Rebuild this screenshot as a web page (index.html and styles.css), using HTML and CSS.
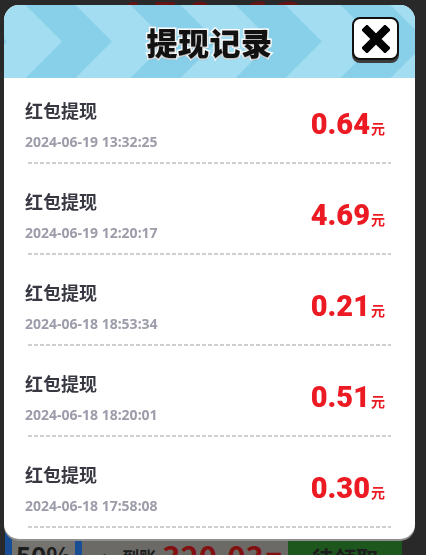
FILE: index.html
```html
<!DOCTYPE html>
<html lang="zh-CN">

<head>
  <meta charset="UTF-8">
  <meta name="viewport" content="width=device-width, initial-scale=1.0">
  <title>提现记录</title>
  <link rel="stylesheet" href="styles.css">
</head>

<body>

  <!-- game page behind the popup -->
  <div class="game">
    <div class="game-top">
      <span class="balance">150.63</span>
    </div>
    <div class="game-bottom">
      <div class="progress">50%</div>
      <span class="arrow">&lt;</span>
      <span class="arrive">到账</span>
      <span class="arrive-money">320.03<small>元</small></span>
      <button class="claim">待领取</button>
    </div>
  </div>

  <div class="mask">
    <div class="dialog">

      <div class="dialog-head">
        <svg class="stripes" width="411" height="73" viewBox="0 0 411 73">
          <defs>
            <pattern id="chevron" x="21.5" y="0" width="105" height="73" patternUnits="userSpaceOnUse">
              <polygon points="0,0 50,0 86.5,36.5 50,73 0,73 36.5,36.5" fill="#88cfe9" />
            </pattern>
          </defs>
          <rect width="411" height="73" fill="#a3ddf2" />
          <rect width="411" height="73" fill="url(#chevron)" />
        </svg>
        <div class="head-bar">
          <h1 class="title">提现记录</h1>
          <button class="close">
            <svg width="28" height="28" viewBox="0 0 28 28">
              <path d="M5 5 L23 23 M23 5 L5 23" stroke="#000" stroke-width="8" stroke-linecap="square" />
            </svg>
          </button>
        </div>
      </div>

      <ul class="records">
        <li class="record">
          <div class="info">
            <div class="name">红包提现</div>
            <div class="time">2024-06-19 13:32:25</div>
          </div>
          <div class="money">0.64<span class="unit">元</span></div>
        </li>
        <li class="record">
          <div class="info">
            <div class="name">红包提现</div>
            <div class="time">2024-06-19 12:20:17</div>
          </div>
          <div class="money">4.69<span class="unit">元</span></div>
        </li>
        <li class="record">
          <div class="info">
            <div class="name">红包提现</div>
            <div class="time">2024-06-18 18:53:34</div>
          </div>
          <div class="money">0.21<span class="unit">元</span></div>
        </li>
        <li class="record">
          <div class="info">
            <div class="name">红包提现</div>
            <div class="time">2024-06-18 18:20:01</div>
          </div>
          <div class="money">0.51<span class="unit">元</span></div>
        </li>
        <li class="record">
          <div class="info">
            <div class="name">红包提现</div>
            <div class="time">2024-06-18 17:58:08</div>
          </div>
          <div class="money">0.30<span class="unit">元</span></div>
        </li>
      </ul>

    </div>
  </div>

</body>

</html>
```

FILE: styles.css
```css
body {
  margin: 0;
  padding: 0;
  width: 426px;
  height: 555px;
  overflow: hidden;
  background: #474747;
  font-family: "Noto Sans", "Noto Sans CJK SC", sans-serif;
}

/* game page behind */
.game {
  height: 555px;
  overflow: hidden;
  display: flex;
  flex-direction: column;
  justify-content: space-between;
}

.game-top {
  text-align: center;
  height: 20px;
  overflow: hidden;
}

.balance {
  display: block;
  margin-top: -6px;
  font-size: 50px;
  line-height: 50px;
  font-weight: 700;
  color: #b02222;
  letter-spacing: 6px;
}

.game-bottom {
  height: 44px;
  overflow: hidden;
  margin: 0 24px 0 5px;
  background: #b8b7b0;
  display: flex;
  align-items: flex-start;
  white-space: nowrap;
  font-family: "Noto Sans CJK SC", sans-serif;
  font-weight: 700;
}

.game-bottom > * {
  flex-shrink: 0;
}

.progress {
  width: 63px;
  height: 60px;
  border: 7px solid #2b85ff;
  border-radius: 22px;
  background: #c8c7c0;
  color: #333;
  font-size: 26px;
  line-height: 26px;
  padding-top: 32px;
  text-align: center;
  margin-top: -8px;
}

.arrow {
  margin: 30px 0 0 12px;
  font-size: 22px;
  font-weight: 400;
  color: #333;
}

.arrive {
  margin: 33px 0 0 16px;
  font-size: 17px;
  color: #333;
}

.arrive-money {
  margin: 25px 0 0 6px;
  font-size: 31px;
  line-height: 40px;
  color: #e01c1c;
}

.arrive-money small {
  font-size: 20px;
}

.claim {
  margin: 26px 0 0 auto;
  width: 114px;
  height: 40px;
  border: 0;
  background: #329632;
  color: #333;
  font-size: 22px;
  font-family: inherit;
  font-weight: 700;
}

/* popup */
.mask {
  position: fixed;
  top: 0;
  left: 0;
  right: 0;
  bottom: 0;
  background: rgba(0, 0, 0, 0.42);
  padding: 5px 11px 0 4px;
}

.dialog {
  width: 411px;
  background: #fff;
  border-radius: 15px;
  overflow: hidden;
  box-shadow: 0 2px 0 #8f8f8f;
}

.dialog-head {
  display: grid;
  height: 73px;
}

.stripes,
.head-bar {
  grid-area: 1 / 1;
}

.head-bar {
  display: grid;
  grid-template-columns: 1fr auto 1fr;
  align-items: center;
}

.title {
  grid-column: 2;
  margin: 0;
  font-family: "Noto Sans CJK SC", sans-serif;
  font-weight: 900;
  font-size: 31px;
  line-height: 40px;
  letter-spacing: 0.5px;
  color: #111;
  -webkit-text-stroke: 3px #fff;
  paint-order: stroke fill;
  text-shadow: 0 1px 2px rgba(0, 0, 0, 0.35);
}

.close {
  grid-column: 3;
  justify-self: end;
  align-self: start;
  margin: 12px 16px 0 0;
  width: 47px;
  height: 43px;
  padding: 0;
  border: 2px solid #111;
  border-radius: 8px;
  background: #fff;
  box-shadow: 0 3px 0 #3c3c3c;
  display: flex;
  align-items: center;
  justify-content: center;
}

.records {
  list-style: none;
  margin: 0;
  padding: 0 24px 11px 21px;
}

.record {
  position: relative;
  display: flex;
  align-items: center;
  justify-content: space-between;
  padding: 25px 6px 13px 0;
}

.record:first-child {
  padding-top: 20px;
}

/* dashed divider */
.record::after {
  content: "";
  position: absolute;
  left: 3px;
  right: 0;
  bottom: 0;
  height: 2px;
  background: repeating-linear-gradient(90deg, #cfcfcf 0 4px, transparent 4px 6px);
}

.name {
  font-family: "Noto Sans CJK SC", sans-serif;
  font-size: 18px;
  line-height: 24px;
  font-weight: 700;
  color: #383842;
}

.time {
  margin-top: 11px;
  font-size: 14px;
  line-height: 18px;
  font-weight: 700;
  color: #9c9caa;
}

.money {
  font-family: "Roboto", sans-serif;
  font-size: 29px;
  line-height: 30px;
  font-weight: 900;
  color: #ec1a22;
  margin-top: 2px;
}

.unit {
  font-family: "Noto Sans CJK SC", sans-serif;
  font-size: 14px;
  font-weight: 700;
  margin-left: 1px;
}
```
